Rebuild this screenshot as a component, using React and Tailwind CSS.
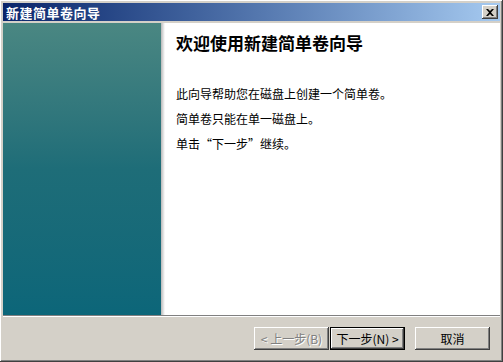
import React from 'react';

const btnRaised =
  'shadow-[inset_-1px_-1px_#404040,inset_1px_1px_#ffffff,inset_-2px_-2px_#808080,inset_2px_2px_#d4d0c8]';

export default function App() {
  return (
    <div
      className={`w-[503px] h-[362px] bg-[#d4d0c8] p-[3px] flex flex-col ${btnRaised}`}
      style={{ fontFamily: '"Noto Sans CJK SC", "Noto Sans", sans-serif' }}
    >
      {/* Title bar */}
      <div className="h-[18px] flex items-center justify-between bg-gradient-to-r from-[#0a246a] to-[#a6caf0] pl-[3px] pr-[2px]">
        <span className="text-white text-[13px] font-bold leading-none tracking-[0.5px]">新建简单卷向导</span>
        <button className={`w-[16px] h-[14px] bg-[#d4d0c8] flex items-center justify-center ${btnRaised}`}>
          <svg width="8" height="7" viewBox="0 0 8 7">
            <path d="M0 0h2l2 2 2-2h2L5 3.5 8 7H6L4 5 2 7H0l3-3.5z" fill="#000" />
          </svg>
        </button>
      </div>

      {/* Body */}
      <div className="mt-[2px] flex flex-col flex-1">
        <div className="h-[292px] flex">
          <div className="w-[158px] bg-gradient-to-b from-[#4a8782] via-[#1e6d78] to-[#0c6679]" />
          <div className="w-[4px] bg-gradient-to-r from-[#b8b8b8] to-white" />
          <div className="flex-1 bg-white pl-[11px] pt-[9px] text-black">
            <h1 className="text-[17px] font-bold leading-[22px]">欢迎使用新建简单卷向导</h1>
            <div className="mt-[27px] text-[12px] leading-[25px]">
              <p>此向导帮助您在磁盘上创建一个简单卷。</p>
              <p>简单卷只能在单一磁盘上。</p>
              <p>单击“下一步”继续。</p>
            </div>
          </div>
        </div>
        <div className="h-px bg-[#808080]" />
        <div className="h-px bg-white" />

        {/* Buttons */}
        <div className="flex justify-end pr-[10px] pt-[10px] text-[12px]">
          <button
            className={`w-[75px] h-[23px] bg-[#d4d0c8] text-[#808080] [text-shadow:1px_1px_#ffffff] ${btnRaised}`}
          >
            &lt; 上一步(B)
          </button>
          <button className="w-[75px] h-[23px] ml-[1px] border border-black bg-[#d4d0c8] shadow-[inset_-1px_-1px_#404040,inset_1px_1px_#ffffff,inset_-2px_-2px_#808080] text-black">
            下一步(N) &gt;
          </button>
          <button className={`w-[75px] h-[23px] ml-[10px] bg-[#d4d0c8] text-black ${btnRaised}`}>
            取消
          </button>
        </div>
      </div>
    </div>
  );
}
